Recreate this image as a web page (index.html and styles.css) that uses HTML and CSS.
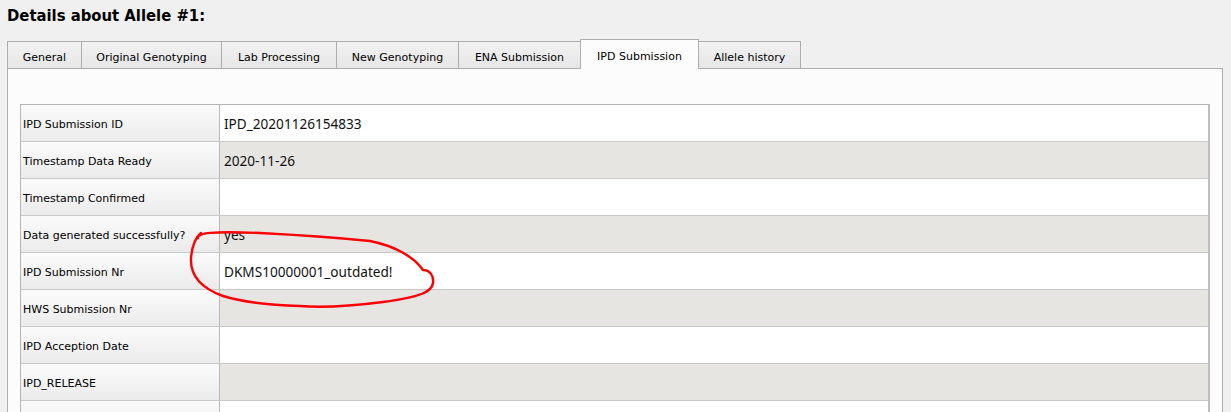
FILE: index.html
```html
<!DOCTYPE html>
<html>
<head>
<meta charset="utf-8">
<link rel="stylesheet" href="styles.css">
</head>
<body>
<div class="page">
  <h1 class="title">Details about Allele #1:</h1>
  <div class="tabs">
    <div class="tab t-general">General</div>
    <div class="tab t-orig">Original Genotyping</div>
    <div class="tab t-lab">Lab Processing</div>
    <div class="tab t-new">New Genotyping</div>
    <div class="tab t-ena">ENA Submission</div>
    <div class="tab t-ipd active">IPD Submission</div>
    <div class="tab t-hist">Allele history</div>
  </div>
  <div class="panel">
    <div class="grid">
      <div class="row"><div class="label">IPD Submission ID</div><div class="value">IPD_20201126154833</div></div>
      <div class="row alt"><div class="label">Timestamp Data Ready</div><div class="value">2020-11-26</div></div>
      <div class="row"><div class="label">Timestamp Confirmed</div><div class="value"></div></div>
      <div class="row alt"><div class="label">Data generated successfully?</div><div class="value">yes</div></div>
      <div class="row"><div class="label">IPD Submission Nr</div><div class="value">DKMS10000001_outdated!</div></div>
      <div class="row alt"><div class="label">HWS Submission Nr</div><div class="value"></div></div>
      <div class="row"><div class="label">IPD Acception Date</div><div class="value"></div></div>
      <div class="row alt"><div class="label">IPD_RELEASE</div><div class="value"></div></div>
      <div class="row"><div class="label"></div><div class="value"></div></div>
    </div>
  </div>
  <svg class="scribble" width="1231" height="412" viewBox="0 0 1231 412">
    <path d="M 198 238 C 197 233, 212 231, 260 233 C 300 235, 340 238, 370 241 C 395 246, 414 257, 423 270 C 430 270, 434 276, 433 283 C 432 292, 420 297, 383 302 C 352 306, 322 308, 300 306 C 270 305, 242 302, 223 296 C 201 288, 190 275, 191 258 C 192 246, 195 238, 201 233" fill="none" stroke="#ff0000" stroke-width="2.4" stroke-linecap="round" stroke-linejoin="round"/>
  </svg>
</div>
</body>
</html>
```

FILE: styles.css
```css
html, body {
  margin: 0;
  padding: 0;
  background: #f0f0f0;
  overflow: hidden;
}

.page {
  width: 1231px;
  height: 412px;
  box-sizing: border-box;
  padding: 0 8px 0 7px;
  position: relative;
  overflow: hidden;
  font-family: "DejaVu Sans", sans-serif;
  color: #000;
}

.title {
  margin: 0;
  padding-top: 6px;
  height: 20px;
  line-height: 20px;
  font-family: "DejaVu Sans Condensed", "DejaVu Sans", sans-serif;
  font-stretch: condensed;
  font-weight: bold;
  font-size: 16.5px;
  color: #000;
}

.tabs {
  display: flex;
  align-items: flex-end;
  margin-top: 13px;
  height: 29px;
  position: relative;
  z-index: 2;
}

.tab {
  box-sizing: border-box;
  height: 27px;
  padding-top: 4px;
  display: flex;
  align-items: center;
  justify-content: center;
  font-size: 11px;
  border: 1px solid #adadad;
  border-bottom: none;
  background: linear-gradient(#f2f2f2, #e6e6e6);
  margin-left: -1px;
}

.tab:first-child { margin-left: 0; }

.tab.active {
  height: 30px;
  margin-bottom: -1px;
  padding-top: 3px;
  background: #fcfcfc;
  position: relative;
  z-index: 3;
  border-top-left-radius: 1px;
  border-top-right-radius: 1px;
}

.t-general { width: 75px; }
.t-orig { width: 141px; }
.t-lab { width: 116px; }
.t-new { width: 123px; }
.t-ena { width: 123px; }
.t-ipd { width: 119px; }
.t-hist { width: 103px; }

.panel {
  position: relative;
  z-index: 1;
  border: 1px solid #adadad;
  border-bottom: none;
  background: #fcfcfc;
  padding: 35px 12px 0 12px;
  height: 344px;
  overflow: hidden;
  box-sizing: border-box;
}

.grid {
  border-top: 1px solid #b4b4b4;
  border-left: 1px solid #b4b4b4;
  border-right: 2px solid #bdbdbd;
}

.row {
  display: flex;
  height: 37px;
  box-sizing: border-box;
  border-bottom: 1px solid #c8c8c8;
}

.label {
  box-sizing: border-box;
  width: 199px;
  flex: none;
  border-right: 1px solid #b9b9b9;
  background: linear-gradient(#fbfbfb, #ebebeb);
  padding: 2px 0 0 2px;
  display: flex;
  align-items: center;
  font-size: 11px;
  color: #000;
}

.value {
  flex: 1;
  background: #ffffff;
  padding-left: 4px;
  display: flex;
  align-items: center;
  font-family: "Noto Sans", "Open Sans", sans-serif;
  font-size: 13.6px;
  color: #111;
}

.row.alt .value {
  background: #e7e5e2;
}

.scribble {
  position: absolute;
  left: 0;
  top: 0;
  pointer-events: none;
  z-index: 5;
}
```
